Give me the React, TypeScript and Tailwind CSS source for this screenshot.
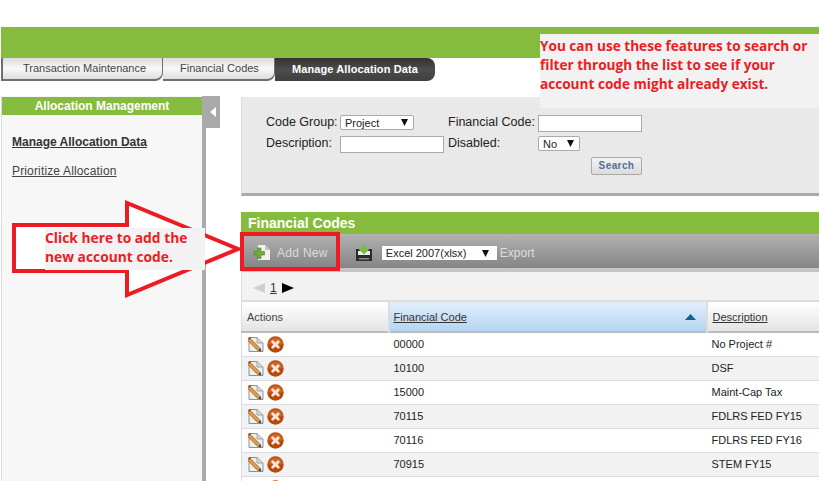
const rows = [
  { code: '00000', desc: 'No Project #' },
  { code: '10100', desc: 'DSF' },
  { code: '15000', desc: 'Maint-Cap Tax' },
  { code: '70115', desc: 'FDLRS FED FY15' },
  { code: '70116', desc: 'FDLRS FED FY16' },
  { code: '70915', desc: 'STEM FY15' },
  { code: '', desc: '' },
];

function EditIcon() {
  return (
    <svg width="18" height="17" viewBox="0 0 18 17" className="shrink-0">
      <path d="M2 1.5H10L16 7V15.5H2Z" fill="#eeeeee" stroke="#8f8f8f" />
      <path d="M10 1.5V7H16" fill="#d5d5d5" stroke="#a5a5a5" />
      <path d="M2 3.5L12 13.5" stroke="#8a6a45" strokeWidth="3.8" />
      <path d="M2 3.5L12 13.5" stroke="#f0a030" strokeWidth="2.4" />
      <path d="M1 2.5L3 .8L4.2 2L2.2 4Z" fill="#b5384a" />
      <path d="M11 14.5L13.5 12L14.5 15.5Z" fill="#3c3c3c" />
    </svg>
  );
}

function DeleteIcon() {
  return (
    <svg width="17" height="17" viewBox="0 0 17 17" className="shrink-0">
      <circle cx="8.5" cy="8.5" r="8.2" fill="#b8490c" />
      <path d="M1.5 8.5A7 7 0 0 1 15.5 8.5Z" fill="#d2661c" />
      <path d="M5.7 5.7L11.3 11.3M11.3 5.7L5.7 11.3" stroke="#f6e7dc" strokeWidth="2.8" strokeLinecap="round" />
    </svg>
  );
}

function AddIcon() {
  return (
    <svg width="18" height="18" viewBox="0 0 18 18" className="shrink-0">
      <path d="M5 1H12L17 6V16H5Z" fill="#f2f2f2" />
      <path d="M12 1V6H17Z" fill="#c2c2c2" />
      <path d="M4.5 4H8V7.5H11.5V11H8V14.5H4.5V11H1V7.5H4.5Z" fill="#71ad3b" stroke="#4f7f2b" strokeWidth=".6" />
    </svg>
  );
}

function ExportIcon() {
  return (
    <svg width="18" height="18" viewBox="0 0 18 18" className="shrink-0">
      <path d="M1 5H17V17H1Z" fill="#2c2c2c" />
      <path d="M3 7H15V11H3Z" fill="#eeeeee" />
      <path d="M4 14H14V15.5H4Z" fill="#8c8c8c" />
      <path d="M6.5 1H11.5V5H14.5L9 10.5L3.5 5H6.5Z" fill="#79bf3f" />
    </svg>
  );
}

function Caret() {
  return (
    <svg width="7" height="7" viewBox="0 0 7 7" className="shrink-0">
      <path d="M0 0H7L3.5 7Z" fill="#111111" />
    </svg>
  );
}

export default function App() {
  return (
    <div className="relative h-[481px] w-[819px] overflow-hidden bg-white font-['Liberation_Sans',sans-serif] text-[12px] text-[#333333]">
      {/* Header */}
      <div className="ml-px mt-[27px] h-[31px] bg-[#86bc3d]" />
      <div className="ml-px flex h-[23px] text-[11px]">
        <div className="flex w-[162px] items-center rounded-br-[8px] border-b-2 border-l-2 border-r border-[#6f6f6f] bg-gradient-to-b from-[#dcdcdc] via-[#f8f8f8] to-[#dedede] pl-5 text-[#444444]">
          Transaction Maintenance
        </div>
        <div className="flex w-[112px] items-center rounded-br-[8px] border-b-2 border-r border-[#6f6f6f] bg-gradient-to-b from-[#dcdcdc] via-[#f8f8f8] to-[#dedede] pl-[17px] text-[#444444]">
          Financial Codes
        </div>
        <div className="flex w-[160px] items-center rounded-r-[8px] bg-gradient-to-b from-[#333333] via-[#4c4c4c] to-[#404040] pl-[17px] font-bold tracking-[0.1px] text-white">
          Manage Allocation Data
        </div>
      </div>

      <div className="mt-[15px] flex h-[385px] items-start">
        {/* Sidebar */}
        <div className="ml-px h-full w-[205px] shrink-0 border-l border-r-4 border-l-[#dddddd] border-r-[#aaaaaa] bg-[#f7f7f7]">
          <div className="mt-px flex h-[18px] items-center justify-center bg-[#86bc3d] text-[12px] font-bold text-white">
            Allocation Management
          </div>
          <div className="mt-[18px] pl-[10px] font-bold text-[#333333] underline">Manage Allocation Data</div>
          <div className="mt-[11px] pl-[10px] tracking-[0.15px] text-[#444444] underline">Prioritize Allocation</div>
        </div>
        <div className="flex h-8 w-[14px] shrink-0 items-center justify-center bg-[#aaaaaa]">
          <svg width="6" height="10" viewBox="0 0 6 10">
            <path d="M6 0V10L0 5Z" fill="#ffffff" />
          </svg>
        </div>

        {/* Main */}
        <div className="ml-[21px] w-[600px] shrink-0">
          <div className="mt-px flex h-[99px] flex-col border-b-[3px] border-l border-b-[#aaaaaa] border-l-[#dddddd] bg-[#e9e9e9] pl-6 pt-[18px] text-[12.5px] leading-[14px] text-[#222222]">
            <div className="flex h-[17px] items-start">
              <span className="w-[74px] shrink-0 whitespace-nowrap">Code Group:</span>
              <div className="flex h-[15px] w-[74px] items-center justify-between rounded-[2px] border border-[#aaaaaa] bg-white pl-1 pr-[5px] text-[11px]">
                Project
                <Caret />
              </div>
              <span className="ml-[34px] w-[90px] shrink-0 whitespace-nowrap">Financial Code:</span>
              <input className="h-[17px] w-[104px] border border-[#aaaaaa] bg-white" />
            </div>
            <div className="mt-1 flex h-[17px] items-start">
              <span className="w-[74px] shrink-0 whitespace-nowrap">Description:</span>
              <input className="h-[17px] w-[104px] border border-[#aaaaaa] bg-white" />
              <span className="ml-1 w-[90px] shrink-0 whitespace-nowrap">Disabled:</span>
              <div className="flex h-[15px] w-[42px] items-center justify-between rounded-[2px] border border-[#aaaaaa] bg-white pl-1 pr-[5px] text-[11px]">
                No
                <Caret />
              </div>
            </div>
            <button className="ml-[325px] mt-1 flex h-[18px] w-[51px] items-center justify-center rounded-[2px] border border-[#aaaaaa] bg-gradient-to-b from-[#f2f2f2] to-[#dcdcdc] text-[10px] font-bold tracking-[0.4px] text-[#4f6f98]">
              Search
            </button>
          </div>

          <div className="mt-4 flex h-[22px] items-center bg-[#86bc3d] pl-[7px] text-[14px] font-bold text-white">
            Financial Codes
          </div>
          <div className="flex h-[38px] items-center border-b-4 border-b-[#c4c4c4] bg-gradient-to-b from-[#b2b2b2] to-[#858585] pt-1 text-[#dddddd]">
            <div className="ml-3 flex items-center">
              <AddIcon />
            </div>
            <span className="ml-[6px] tracking-[0.3px]">Add New</span>
            <div className="ml-[27px] flex items-center">
              <ExportIcon />
            </div>
            <div className="ml-[9px] flex h-[14px] w-[115px] items-center justify-between bg-white pl-1 pr-[8px] text-[11px] text-[#222222]">
              Excel 2007(xlsx)
              <Caret />
            </div>
            <span className="ml-[3px]">Export</span>
          </div>

          <div className="flex h-[28px] items-center border-l border-l-[#dddddd] bg-[#f2f2f2] pl-[11px] pt-1 text-[#333333]">
            <svg width="12" height="10" viewBox="0 0 12 10">
              <path d="M12 0V10L0 5Z" fill="#cfcfcf" />
            </svg>
            <span className="ml-[5px] underline">1</span>
            <svg width="12" height="10" viewBox="0 0 12 10" className="ml-[5px]">
              <path d="M0 0V10L12 5Z" fill="#000000" />
            </svg>
          </div>

          <table className="w-[600px] table-fixed border-l border-l-[#dddddd] text-[11px]">
            <thead>
              <tr className="h-[31px] border-t-2 border-b-2 border-t-[#dddddd] border-b-[#bbbbbb]">
                <th className="w-[147px] bg-gradient-to-b from-white to-[#e4e4e4] pb-px pl-[5px] pt-[2px] text-left font-normal text-[#444444]">
                  Actions
                </th>
                <th className="w-[318px] border-l-2 border-l-[#dddddd] bg-gradient-to-b from-[#e2effc] to-[#b5d4f1] pl-1 pt-px text-left font-normal">
                  <div className="flex items-center justify-between pr-[10px]">
                    <span className="underline">Financial Code</span>
                    <svg width="11" height="6" viewBox="0 0 11 6">
                      <path d="M0 6L5.5 0L11 6Z" fill="#14628f" />
                    </svg>
                  </div>
                </th>
                <th className="border-l-2 border-l-[#dddddd] bg-gradient-to-b from-white to-[#e4e4e4] pl-[5px] pt-px text-left font-normal">
                  <span className="underline">Description</span>
                </th>
              </tr>
            </thead>
            <tbody>
              {rows.map((row, i) => (
                <tr key={i} className={`h-6 border-b border-b-[#dddddd] ${i % 2 === 1 ? 'bg-[#f2f2f2]' : 'bg-white'}`}>
                  <td className="pl-[5px]">
                    <div className="flex items-center gap-[2px]">
                      <EditIcon />
                      <DeleteIcon />
                    </div>
                  </td>
                  <td className="pl-[5px] text-[#222222]">{row.code}</td>
                  <td className="pl-[5px] text-[#222222]">{row.desc}</td>
                </tr>
              ))}
            </tbody>
          </table>
        </div>
      </div>

      {/* Annotations */}
      <div className="absolute left-[540px] top-[34px] h-[74px] w-[279px] bg-[#f2f2f2] pt-[2px] font-['Open_Sans',sans-serif] text-[13.6px] font-bold leading-[19px] text-[#ed1c24]">
        You can use these features to search or
        <br />
        filter through the list to see if your
        <br />
        account code might already exist.
      </div>
      <svg width="250" height="110" viewBox="0 0 250 110" className="absolute left-0 top-[195px]">
        <path d="M14 30H127V8L238 54L127 100V76H14Z" fill="#ffffff" stroke="#ed1c24" strokeWidth="4" />
      </svg>
      <div className="absolute left-[45px] top-[228px] h-[42px] w-[160px] bg-[#f2f2f2] font-['Open_Sans',sans-serif] text-[13.8px] font-bold leading-[19px] text-[#ed1c24]">
        Click here to add the
        <br />
        new account code.
      </div>
      <div className="absolute left-[240px] top-[232px] h-[39px] w-[100px] border-4 border-[#ed1c24]" />
    </div>
  );
}
